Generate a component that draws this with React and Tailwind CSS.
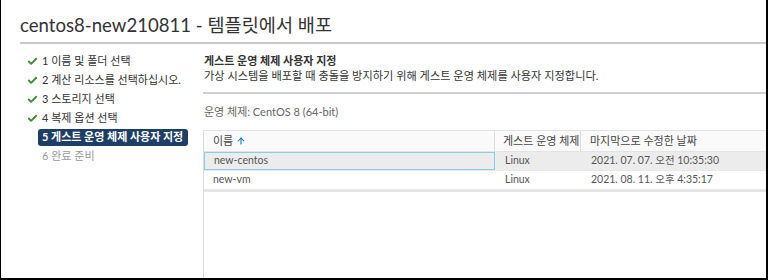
import { Check, ArrowUp } from 'lucide-react';

const STEPS = [
  { n: 1, label: '이름 및 폴더 선택', done: true },
  { n: 2, label: '계산 리소스를 선택하십시오.', done: true },
  { n: 3, label: '스토리지 선택', done: true },
  { n: 4, label: '복제 옵션 선택', done: true },
  { n: 5, label: '게스트 운영 체제 사용자 지정', active: true },
  { n: 6, label: '완료 준비' },
];

const ROWS = [
  { name: 'new-centos', os: 'Linux', date: '2021. 07. 07. 오전 10:35:30', selected: true },
  { name: 'new-vm', os: 'Linux', date: '2021. 08. 11. 오후 4:35:17' },
];

const FONT = { fontFamily: "Lato, 'Noto Sans CJK KR', sans-serif" };

export default function App() {
  return (
    <div
      className="w-[768px] h-[280px] bg-white border-l border-r-2 border-b-2 border-black overflow-hidden flex flex-col text-[#333]"
      style={FONT}
    >
      <div className="ml-[19px] h-[44px] border-b-2 border-[#c9c9c9] pt-[13px] text-[18.6px] leading-[24px] text-[#333] whitespace-nowrap">
        centos8-new210811 - 템플릿에서 배포
      </div>

      <div className="flex flex-1 min-h-0">
        <ul className="w-[202px] shrink-0 pt-[8px] pl-[26px] text-[11px]">
          {STEPS.map((s) => (
            <li key={s.n} className="h-[19px] flex items-center">
              <span className="w-[11px] mr-[4px] flex items-center">
                {s.done && <Check className="w-[11px] h-[11px] text-[#3c8d2f]" strokeWidth={4} />}
              </span>
              {s.active ? (
                <span className="-ml-[4px] w-[150px] h-[17px] px-[4px] rounded-[3px] bg-[#1d3e66] text-white font-bold flex items-center whitespace-nowrap">
                  {s.n} {s.label}
                </span>
              ) : (
                <span className={`whitespace-nowrap ${s.done ? 'text-[#333]' : 'text-[#9a9a9a]'}`}>
                  {s.n} {s.label}
                </span>
              )}
            </li>
          ))}
        </ul>

        <div className="flex-1 min-w-0 flex flex-col">
          <div className="pl-[1px] pt-[9px] pb-[9px] border-b-2 border-[#d0d0d0] text-[11px] leading-[15px]">
            <div className="font-semibold text-[#333]">게스트 운영 체제 사용자 지정</div>
            <div className="text-[#333] text-[11.2px]">가상 시스템을 배포할 때 충돌을 방지하기 위해 게스트 운영 체제를 사용자 지정합니다.</div>
          </div>
          <div className="pl-[1px] pt-[10px] h-[36px] text-[11px] text-[#666]">운영 체제: CentOS 8 (64-bit)</div>

          <div className="flex-1 border-l border-[#dcdcdc] border-t border-t-[#e4e4e4] text-[10.5px] text-[#565656]">
            <div className="flex h-[21px] items-center bg-[#fafafa] border-b border-[#e4e4e4] text-[11px] text-[#444]">
              <div className="w-[291px] pl-[9px] flex items-center gap-[3px] border-r border-[#dcdcdc] h-full">
                이름 <ArrowUp className="w-[10px] h-[10px] text-[#0079b8]" strokeWidth={2.5} />
              </div>
              <div className="w-[86px] pl-[8px] border-r border-[#dcdcdc] h-full flex items-center whitespace-nowrap">게스트 운영 체제</div>
              <div className="flex-1 pl-[9px] whitespace-nowrap">마지막으로 수정한 날짜</div>
            </div>
            {ROWS.map((r) => (
              <div
                key={r.name}
                className={`flex h-[19px] items-center border-b border-[#e8e8e8] ${r.selected ? 'bg-[#ececec]' : ''}`}
              >
                <div className={`w-[291px] pl-[9px] h-full flex items-center ${r.selected ? 'border border-[#8ccbea]' : ''}`}>{r.name}</div>
                <div className="w-[86px] pl-[10px]">{r.os}</div>
                <div className="flex-1 pl-[10px] whitespace-nowrap">{r.date}</div>
              </div>
            ))}
            <div className="h-[2px] bg-[#e4e4e4]"></div>
          </div>
        </div>
      </div>
    </div>
  );
}
